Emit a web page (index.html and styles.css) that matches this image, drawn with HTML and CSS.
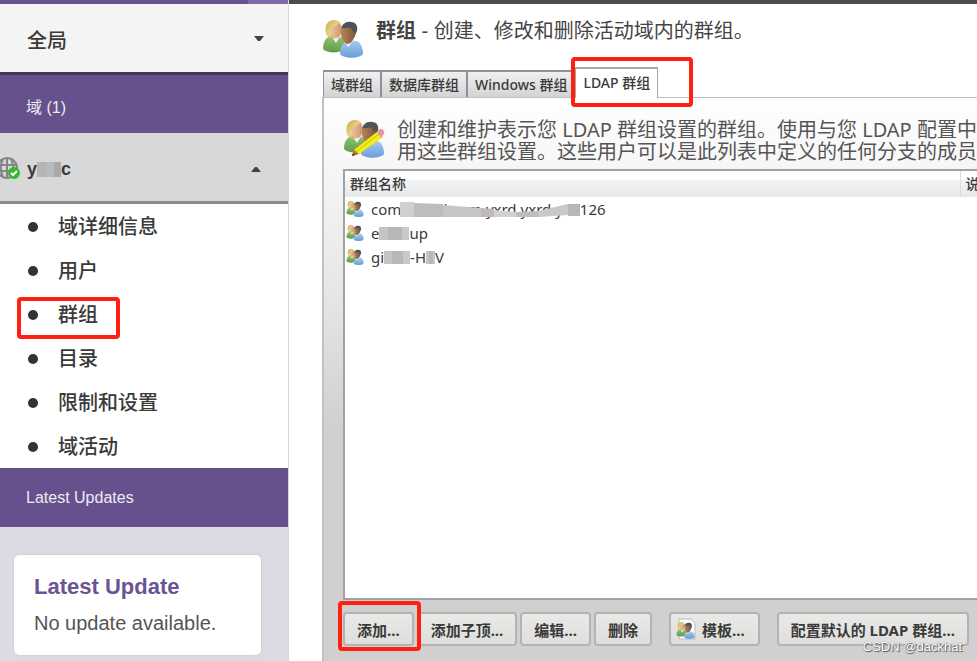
FILE: index.html
```html
<!DOCTYPE html>
<html lang="zh-CN">
<head>
<meta charset="utf-8">
<title>群组</title>
<link rel="stylesheet" href="styles.css">
</head>
<body>
<svg class="defs" aria-hidden="true">
  <defs>
    <linearGradient id="hair" x1="0" y1="0" x2="1" y2="1"><stop offset="0" stop-color="#c9a544"/><stop offset=".5" stop-color="#ead48c"/><stop offset="1" stop-color="#a98332"/></linearGradient>
    <linearGradient id="green" x1="0" y1="0" x2="0" y2="1"><stop offset="0" stop-color="#92c472"/><stop offset="1" stop-color="#5f9c48"/></linearGradient>
    <linearGradient id="blue" x1="0" y1="0" x2="0" y2="1"><stop offset="0" stop-color="#a5cbf2"/><stop offset="1" stop-color="#6a9dd6"/></linearGradient>
    <linearGradient id="skin" x1="0" y1="0" x2="1" y2="0"><stop offset="0" stop-color="#eac09a"/><stop offset="1" stop-color="#cb9670"/></linearGradient>
    <linearGradient id="tan" x1="0" y1="0" x2="1" y2="0"><stop offset="0" stop-color="#b98558"/><stop offset="1" stop-color="#7e5635"/></linearGradient>
    <symbol id="people" viewBox="0 0 42 42">
      <path d="M1 31c0-8 3-11 7-13h9c4 2 6 6 6 13-4 4-18 5-22 0z" fill="url(#green)"/>
      <path d="M9 18l5 7 5-8z" fill="#f3f0e6"/>
      <path d="M4 16C2 7 6 2 12 2c5 0 8 3 7 8l-2 8c-5 4-11 3-13-2z" fill="url(#hair)"/>
      <path d="M10 9c3 0 5-2 7-4 3 3 3 7 2 10-1 4-3 5-5 5-4 0-6-5-4-11z" fill="url(#skin)"/>
      <path d="M18 36c0-9 4-12 8-13h9c4 2 6 7 6 13-4 5-19 5-23 0z" fill="url(#blue)"/>
      <path d="M22 22l4 7 6-7z" fill="#eef5fc"/>
      <path d="M19 11c1-5 5-8 10-7 5 0 7 4 6 9l-3 7-7-2z" fill="#50545a"/>
      <path d="M19 10c2 1 8-1 10 0l2 4c2-2 3 0 2 2-1 6-4 10-8 10-5-2-7-9-6-16z" fill="url(#tan)"/>
    </symbol>
  </defs>
</svg>
<div class="app">
  <aside class="sidebar">
    <div class="strip"><span class="strip-end"></span></div>
    <button class="global" type="button"><span>全局</span><svg class="caret" viewBox="0 0 10 6"><path d="M0 0h10L6 5H4z" fill="#444"/></svg></button>
    <h2 class="band">域 (1)</h2>
    <button class="domain" type="button">
      <svg class="globe" viewBox="0 0 22 24"><g fill="none" stroke="#858585" stroke-width="2"><circle cx="7" cy="11" r="10"/><path d="M-3 8h19M-3 14h19M7 1v20M3 2c-3 6-3 12 0 18M11 2c3 6 3 12 0 18"/></g><circle cx="14" cy="16" r="6" fill="#35b82d"/><path d="M11 16l2 2 4-4" fill="none" stroke="#fff" stroke-width="2"/></svg>
      <span class="domain-name">y<span class="mask mask-domain"></span>c</span>
      <svg class="caret" viewBox="0 0 10 6"><path d="M4 1h2l4 5H0z" fill="#444"/></svg>
    </button>
    <ul class="menu">
      <li><a href="#">域详细信息</a></li>
      <li><a href="#">用户</a></li>
      <li class="marked"><a href="#">群组</a></li>
      <li><a href="#">目录</a></li>
      <li><a href="#">限制和设置</a></li>
      <li><a href="#">域活动</a></li>
    </ul>
    <h2 class="band band-updates">Latest Updates</h2>
    <div class="updates">
      <section class="card"><h3>Latest Update</h3><p>No update available.</p></section>
    </div>
  </aside>

  <main class="main">
    <header class="heading">
      <svg class="icon-lg"><use href="#people"/></svg>
      <h1>群组<span> - 创建、修改和删除活动域内的群组。</span></h1>
    </header>
    <nav class="tabs">
      <button type="button">域群组</button>
      <button type="button">数据库群组</button>
      <button type="button">Windows 群组</button>
      <button class="active" type="button">LDAP 群组</button>
    </nav>
    <section class="panel">
      <div class="intro">
        <svg class="icon-lg" viewBox="0 0 42 42"><use href="#people" width="42" height="42"/><path d="M9 38l2-6L35 13l5 6-24 17z" fill="#f2ed12"/><path d="M12 35L37 15" stroke="#c7bd12" stroke-width="1"/><path d="M9 38l2-6 5 4z" fill="#b96b34"/><path d="M9 38l1-3 2 2z" fill="#333"/><path d="M34 14l3-3c3-1 5 3 4 5l-3 4z" fill="#e29aab"/></svg>
        <p>创建和维护表示您 LDAP 群组设置的群组。使用与您 LDAP 配置中使<br>用这些群组设置。这些用户可以是此列表中定义的任何分支的成员。</p>
      </div>
      <div class="list">
        <table>
          <thead><tr><th>群组名称</th><th class="col-desc">说明</th></tr></thead>
          <tbody>
            <tr><td colspan="2"><span class="entry"><svg class="icon-sm"><use href="#people"/></svg><span class="name">com<span class="gap"></span>d.com.yxrd.yxrd.yxd126<svg class="cover" viewBox="0 0 180 16"><path d="M0 0h14v15H0z" fill="#cfcfcf"/><path d="M14 1l29 1v13H14z" fill="#bdbdbd"/><path d="M43 3l38 3v9H43z" fill="#c6c5c7"/><path d="M81 6l13 1v8H81z" fill="#bcb8bc"/><path d="M94 8l22 2v5H94z" fill="#d2d0d3"/><path d="M116 10l22-1v6h-22z" fill="#bdbdbd"/><path d="M138 9l30-7v11l-30 2z" fill="#c9c9c9"/><path d="M168 2h12v12h-12z" fill="#b9b6b9"/></svg></span></span></td></tr>
            <tr><td colspan="2"><span class="entry"><svg class="icon-sm"><use href="#people"/></svg><span class="name">e<span class="mask mask-b"></span>up</span></span></td></tr>
            <tr><td colspan="2"><span class="entry"><svg class="icon-sm"><use href="#people"/></svg><span class="name">gi<span class="mask mask-c"></span>-H<span class="mask mask-d"></span>V</span></span></td></tr>
          </tbody>
        </table>
      </div>
      <div class="actions">
        <button class="add" type="button">添加...</button>
        <button type="button">添加子顶...</button>
        <button type="button">编辑...</button>
        <button type="button">删除</button>
        <button class="template" type="button"><svg class="icon-tpl" viewBox="0 0 20 22"><path d="M3 1h12l4 4v16H3z" fill="#fafafa" stroke="#bbb"/><use href="#people" x="0" y="3" width="19" height="19"/></svg>模板...</button>
        <button class="defaults" type="button">配置默认的 LDAP 群组...</button>
      </div>
    </section>
    <small class="watermark">CSDN @dackhat</small>
  </main>
</div>
</body>
</html>
```
FILE: styles.css
```css
*, *::before, *::after { box-sizing: border-box; }
body {
  margin: 0;
  font-family: "Liberation Sans", "Noto Sans CJK SC", sans-serif;
  color: #3a3a3a;
  overflow: hidden;
}
h1, h2, h3, p, ul { margin: 0; padding: 0; }
button { font: inherit; color: inherit; margin: 0; }
.defs { position: absolute; width: 0; height: 0; }
.app { display: grid; grid-template-columns: 289px minmax(0, 1fr); height: 100vh; }

.sidebar {
  display: flex;
  flex-direction: column;
  border-right: 1px solid #d8d8dc;
  background: #fff;
}
.strip { display: flex; justify-content: flex-end; height: 4px; background: #67518c; }
.strip-end { width: 40px; background: #8069ab; }
.global, .domain {
  display: flex;
  align-items: center;
  width: 100%;
  border: 0;
  text-align: left;
  font-size: 20px;
  font-weight: 500;
}
.global {
  justify-content: space-between;
  height: 71px;
  padding: 2px 24px 0 27px;
  background: #f4f4f4;
  border-bottom: 3px solid #403750;
}
.caret { width: 10px; height: 6px; }
.band {
  display: flex;
  align-items: center;
  height: 58px;
  padding: 4px 26px 0;
  background: #67518c;
  color: #eeeaf5;
  font-size: 16px;
  font-weight: 400;
}
.domain {
  height: 71px;
  padding: 4px 27px 0 0;
  background: #d8d8d8;
  border-bottom: 3px solid #8a8a8a;
  font-size: 18px;
  font-weight: 700;
}
.globe { width: 22px; height: 24px; margin-right: 5px; }
.domain-name { display: flex; align-items: center; margin-right: auto; }
.mask { display: inline-block; height: 13px; background: linear-gradient(90deg, #c4c4c4 0 30%, #b9b6b9 30% 75%, #c9c8ca 75%); }
.mask-domain { width: 24px; height: 15px; background: linear-gradient(90deg, #b5b5b5 0 40%, #b9bcbc 40% 70%, #a9a9a9 70%); }
.menu { list-style: none; }
.menu li { display: flex; align-items: center; height: 44px; padding: 1px 0 0 28px; }
.menu li::before { content: ""; width: 10px; height: 10px; border-radius: 50%; background: #333; }
.menu a { margin-left: 20px; color: #3a3a3a; font-size: 20px; font-weight: 500; line-height: 28px; text-decoration: none; }
.marked, .active, .add { position: relative; }
.marked::after, .tabs .active::after, .add::after {
  content: "";
  position: absolute;
  border: 4px solid #ff2011;
  border-radius: 4px;
  pointer-events: none;
}
.marked::after { left: 17px; top: 5px; width: 103px; height: 42px; }
.band-updates { height: 59px; padding-top: 0; }
.updates { flex: 1; padding: 28px 27px 6px 14px; background: #dcdae3; }
.card { height: 100%; padding: 17px 20px 10px; background: #fff; border-radius: 5px; box-shadow: 0 0 2px #bbb; }
.card h3 { color: #6a5495; font-size: 22px; line-height: 30px; }
.card p { color: #555; font-size: 20px; line-height: 42px; white-space: nowrap; }

.main { display: flex; flex-direction: column; min-width: 0; padding-left: 33px; border-top: 4px solid #4b4b4b; position: relative; }
.heading, .intro, .tabs, .actions, .list {
  font-family: "Noto Sans", "Noto Sans CJK SC", sans-serif;
}
.heading { display: flex; gap: 12px; height: 63px; padding-top: 14px; color: #444; }
.icon-lg { flex: none; width: 42px; height: 42px; }
.heading h1 { font-family: "Liberation Sans", "Noto Sans CJK SC", sans-serif; font-size: 20px; line-height: 26px; white-space: nowrap; }
.heading h1 span { font-weight: 400; }
.tabs { display: flex; align-items: flex-end; height: 30px; padding-left: 1px; }
.tabs button {
  height: 27px;
  padding: 0 7px;
  border: 1px solid #8f9099;
  border-width: 2px 1px 0;
  background: linear-gradient(#f0f0f0, #d3d3d3);
  font-size: 14px;
  font-weight: 500;
  line-height: 24px;
  white-space: nowrap;
}
.tabs .active { height: 31px; padding: 0 7px 2px; margin-bottom: -1px; background: #fff; border-color: #a5a7b0; z-index: 1; }
.tabs .active::after { left: -5px; top: -12px; width: 122px; height: 50px; }
.panel {
  display: flex;
  flex: 1;
  flex-direction: column;
  min-height: 0;
  padding: 20px 0 15px 19px;
  border: 2px solid #c1c1c4;
  border-width: 1px 0 0 2px;
  background: linear-gradient(#fff, #e8e7e8 190px, #d1cfd0 330px);
}
.intro { display: flex; gap: 12px; height: 51px; color: #555; }
.intro p { padding-top: 1px; font-size: 20px; line-height: 22px; white-space: nowrap; }
.list { flex: 1; border: 2px solid #9fa1a9; border-right: 0; background: #fff; }
.list table { width: 100%; border-collapse: collapse; table-layout: fixed; }
.list th {
  height: 26px;
  padding: 0 5px;
  background: linear-gradient(#fff 30%, #f1f3f5 40%, #e6e7e9);
  font-size: 14px;
  font-weight: 500;
  line-height: 20px;
  text-align: left;
  white-space: nowrap;
  overflow: hidden;
}
.list .col-desc { width: 17px; border-left: 1px solid #dadde2; }
.list td { height: 24px; padding: 0; }
.entry { display: flex; align-items: center; gap: 7px; padding-left: 1px; font-size: 15px; line-height: 22px; }
.icon-sm { width: 18px; height: 18px; }
.name { position: relative; display: flex; align-items: center; }
.gap { width: 37px; }
.cover { position: absolute; left: 29px; top: 4px; width: 180px; height: 16px; }
.mask-b { width: 30px; }
.mask-c { width: 26px; }
.mask-d { width: 9px; }
.actions { display: flex; gap: 3px; padding-top: 12px; }
.actions button {
  display: flex;
  align-items: center;
  justify-content: center;
  height: 34px;
  padding: 0 12px;
  border: 2px solid #b2b3b5;
  border-radius: 4px;
  background: linear-gradient(#e9eae6, #dedfdc);
  font-size: 15px;
  font-weight: 700;
  white-space: nowrap;
}
.actions .add::after { left: -7px; top: -13px; width: 83px; height: 50px; }
.actions .template { gap: 6px; margin-left: 14px; padding: 0 13px 0 5px; }
.actions .defaults { margin-left: 14px; }
.icon-tpl { width: 20px; height: 22px; }
.watermark { position: absolute; right: 15px; bottom: 6px; color: #fff; font-size: 13px; line-height: 16px; text-shadow: 1px 1px 1px #555, 0 0 1px #666; }
```
